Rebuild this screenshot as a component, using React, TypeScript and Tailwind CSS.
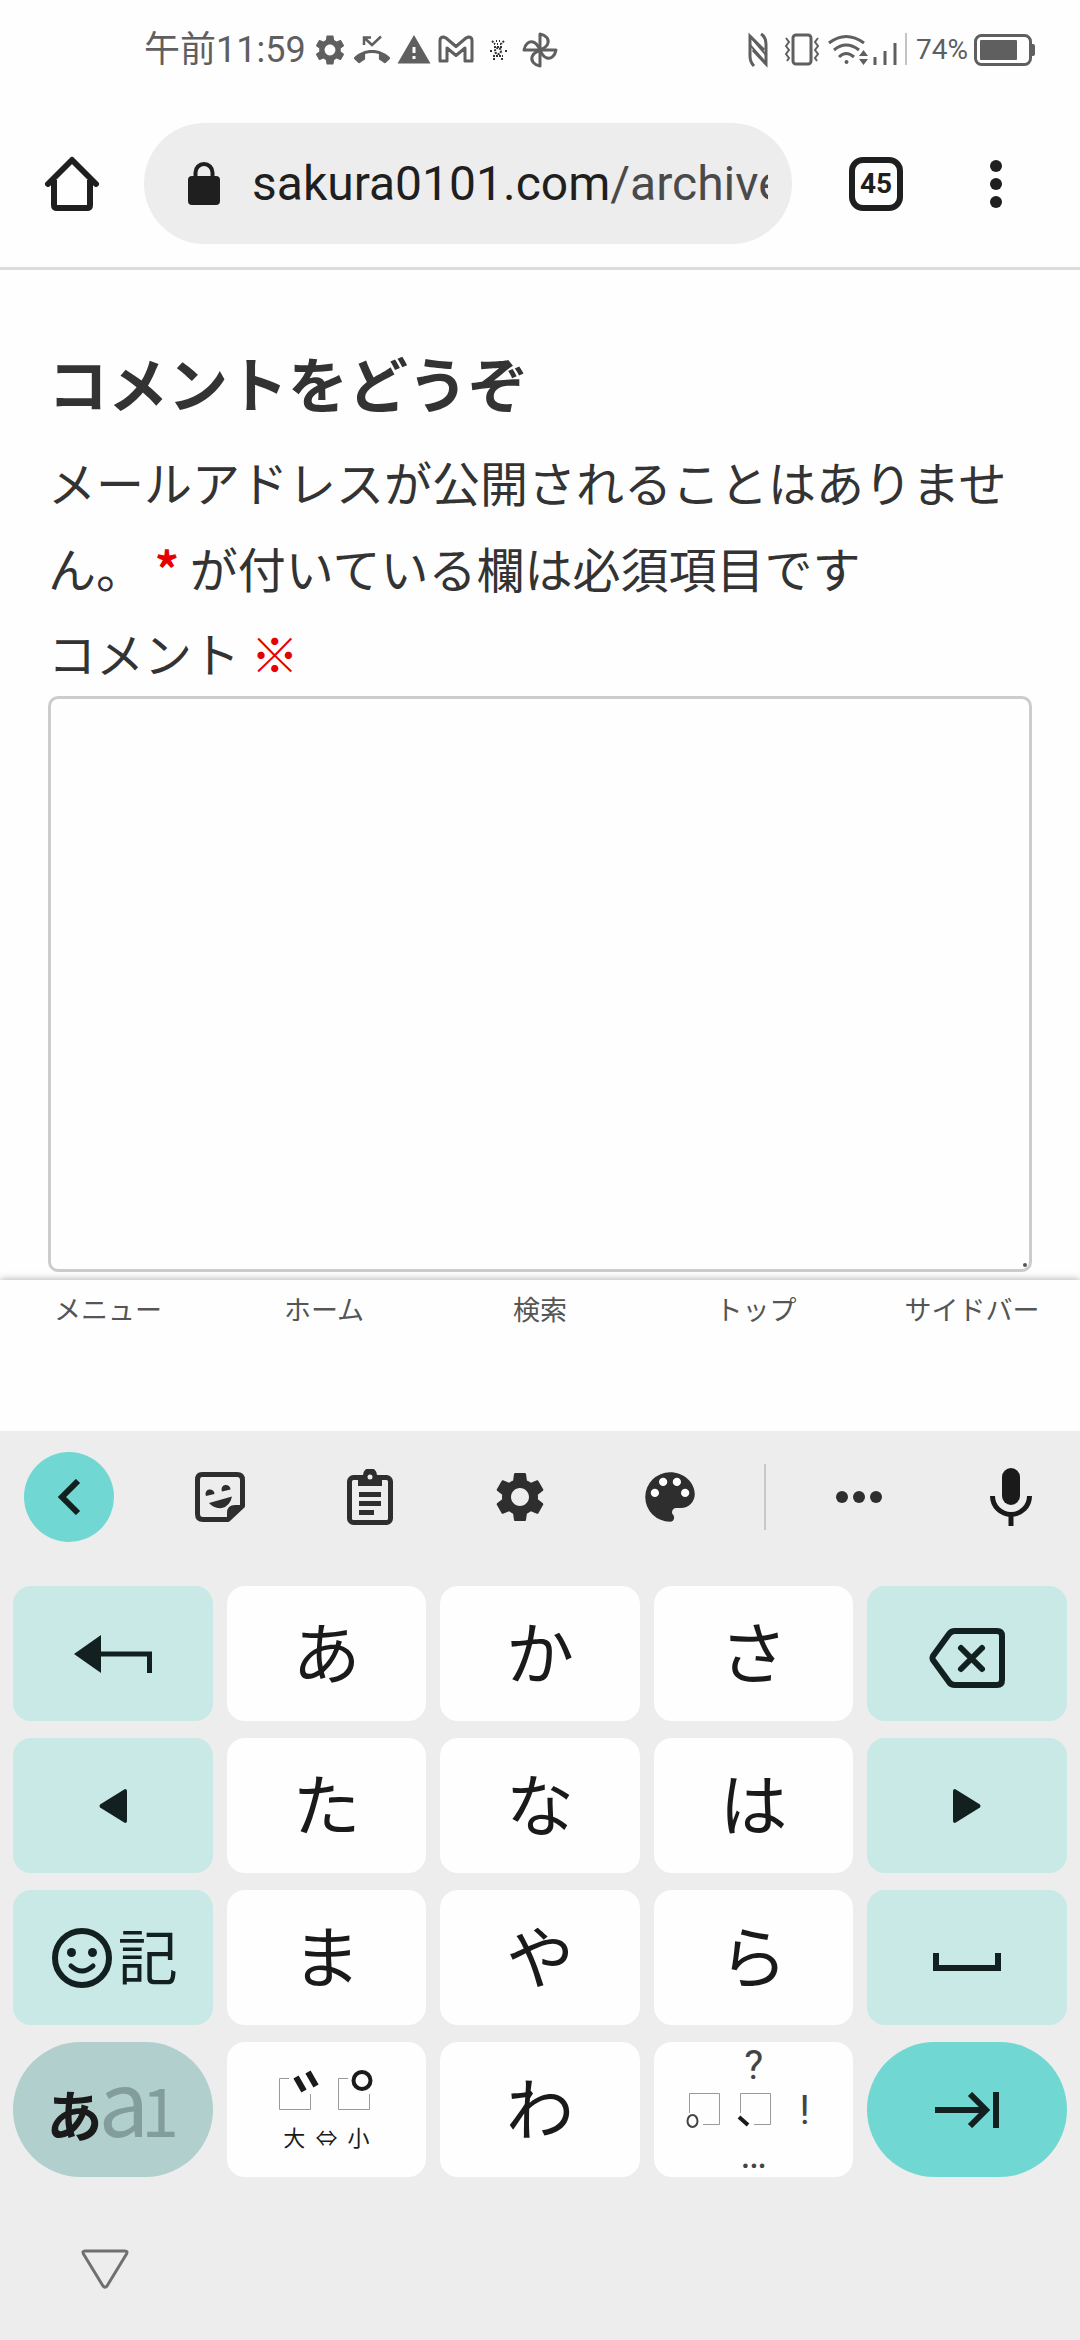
import type { ReactNode } from "react"
import clsx from "clsx"
import { MdSettings, MdWarning } from "react-icons/md"

const menuItems = ["メニュー", "ホーム", "検索", "トップ", "サイドバー"]

function StatusBar() {
    return (
        <div className="flex h-[100px] items-center justify-between pl-36 pr-11 text-[#5f5f5f]">
            <div className="flex items-center gap-[6px]">
                <span className="text-[36px] leading-[44px]">午前11:59</span>
                <MdSettings className="size-9" />
                <svg className="size-9" viewBox="0 0 36 36" fill="none">
                    <path d="M10 13V5.500H17M10.500 6L18 13L27 4.500" stroke="currentColor" strokeWidth="2.500" />
                    <path
                        transform="scale(1.5)"
                        fill="currentColor"
                        d="M23.710 16.670C20.660 13.780 16.540 12 12 12 7.460 12 3.340 13.780.29 16.670c-.18.18-.29.43-.29.71s.11.53.29.71l2.480 2.480c.18.18.43.29.71.29.27 0 .52-.11.7-.28.79-.74 1.690-1.360 2.660-1.850.33-.16.56-.5.56-.9v-3.100C8.850 14.250 10.400 14 12 14s3.150.25 4.600.73v3.100c0 .4.23.74.56.9.98.49 1.870 1.120 2.670 1.850.18.18.43.28.7.28.28 0 .53-.11.71-.29l2.480-2.480c.18-.18.29-.43.29-.71s-.12-.52-.3-.71z"
                    />
                </svg>
                <MdWarning className="size-9" />
                <svg className="size-9" viewBox="0 0 36 36" fill="none" stroke="currentColor" strokeWidth="3" strokeLinejoin="round">
                    <path d="M2 8.500Q2 5 5.500 5L8 6L18 14.500L28 6L30.500 5Q34 5 34 8.500V29H27V16L18 23.500L9 16V29H2Z" />
                </svg>
                <svg className="mx-2 h-6 w-5" viewBox="0 0 20 24" fill="none" stroke="#333" strokeWidth="2">
                    <path d="M4 3l3 3M16 3l-3 3M6 9h8M5 18h10M6 22v-2M14 22v-2M2 13h2M17 13h2" strokeDasharray="2 1" />
                    <circle cx="10" cy="13" r="3" strokeDasharray="2 1" />
                    <path d="M6 6h8M8 3h4" strokeDasharray="1 2" />
                </svg>
                <svg className="size-9" viewBox="0 0 36 36" fill="none" stroke="currentColor" strokeWidth="3" strokeLinejoin="round">
                    <path d="M18 18V2C24 3 27 7 26 11Q25 15 18 18" />
                    <path d="M18 18H34C33 24 29 27 25 26Q21 25 18 18" />
                    <path d="M18 18V34C12 33 9 29 10 25Q11 21 18 18" />
                    <path d="M18 18H2C3 12 7 9 11 10Q15 11 18 18" />
                </svg>
            </div>

            <div className="flex items-center">
                <svg className="h-9 w-6" viewBox="0 0 24 36" fill="none" stroke="currentColor" strokeWidth="3">
                    <path d="M8 34Q4 30 4 24V4L18 18" />
                    <path d="M15 2Q20 5 20 12V32L7 18" />
                    <path d="M4 4L20 23M4 13L20 31" strokeWidth="2" />
                </svg>
                <svg className="ml-[14px] h-9 w-9" viewBox="0 0 36 36" fill="none" stroke="currentColor" strokeWidth="3">
                    <rect x="9" y="3" width="18" height="29" rx="3" />
                    <path d="M2 6l3 4-3 4 3 4-3 4 3 4-2 3M34 6l-3 4 3 4-3 4 3 4-3 4 2 3" strokeWidth="2" />
                </svg>
                <svg className="ml-2 h-9 w-10" viewBox="0 0 40 36" fill="none" stroke="currentColor" strokeWidth="3">
                    <path d="M1 11Q18 -2 36 11M6 18Q18 8 31 18M11 25Q18 18 26 25" />
                    <circle cx="18.500" cy="30" r="2" fill="currentColor" stroke="none" />
                    <path d="M31 24l4.500-6 4.500 6zM31 27l4.500 6 4.500-6z" fill="currentColor" stroke="none" />
                </svg>
                <svg className="ml-1 h-9 w-9" viewBox="0 0 36 36" stroke="currentColor" strokeWidth="3">
                    <path d="M3 33v-8M13 33V19M23 33V11" />
                    <path d="M34 33V1" stroke="#c4c4c4" strokeWidth="2" />
                </svg>
                <span className="ml-2 text-[28px] leading-9">74%</span>
                <svg className="ml-[6px] h-8 w-[62px]" viewBox="0 0 62 32" fill="none">
                    <rect x="1.500" y="1.500" width="55" height="29" rx="6" stroke="currentColor" strokeWidth="3" />
                    <rect x="6" y="6" width="37" height="20" rx="1" fill="currentColor" />
                    <path d="M58 10h1q2 0 2 2v8q0 2-2 2h-1z" fill="currentColor" />
                </svg>
            </div>
        </div>
    )
}

function AddressBar() {
    return (
        <header className="flex h-[170px] items-center border-b-[3px] border-[#dcdcdc] text-[#1f1f1f]">
            <button aria-label="ホーム" className="flex w-36 justify-center">
                <svg className="size-14" viewBox="0 0 56 56" fill="none" stroke="currentColor" strokeWidth="6" strokeLinejoin="round">
                    <path d="M4 28L28 4L52 28" strokeLinecap="round" />
                    <path d="M10 24V49Q10 52 13 52H43Q46 52 46 49V24" />
                </svg>
            </button>
            <button className="flex h-[121px] min-w-0 flex-1 items-center rounded-full bg-[#ededed] pl-11 pr-6">
                <svg className="h-[44px] w-8 shrink-0" viewBox="0 0 32 44" fill="none">
                    <path d="M7.500 18V10.500a8.500 8.500 0 0 1 17 0V18" stroke="currentColor" strokeWidth="4" />
                    <rect y="14" width="32" height="29" rx="4" fill="currentColor" />
                </svg>
                <span className="ml-8 min-w-0 overflow-hidden whitespace-nowrap text-left text-[48px] leading-[60px]">
                    sakura0101.com<span className="text-[#4a4a4a]">/archives</span>
                </span>
            </button>
            <button aria-label="タブ" className="ml-[57px] flex size-[54px] items-center justify-center rounded-[14px] border-[6px] border-current text-[28px] font-bold leading-none">
                45
            </button>
            <button aria-label="その他" className="ml-[69px] mr-[60px] flex h-[60px] w-12 items-center justify-center">
                <svg className="h-12 w-3" viewBox="0 0 12 48" fill="currentColor">
                    <circle cx="6" cy="6" r="6" />
                    <circle cx="6" cy="24" r="6" />
                    <circle cx="6" cy="42" r="6" />
                </svg>
            </button>
        </header>
    )
}

function CommentForm() {
    return (
        <main className="px-12 pb-2 pt-[67px] font-['Noto_Sans_CJK_JP',sans-serif] text-[48px] text-[#333]">
            <h3 className="mb-[11px] text-[60px] font-bold leading-[90px]">コメントをどうぞ</h3>
            <p className="leading-[86px]">
                メールアドレスが公開されることはありません。 <span className="font-bold text-[#e60000]">*</span> が付いている欄は必須項目です
            </p>
            <label htmlFor="comment" className="block pb-[2px] leading-[84px]">
                コメント <span className="text-[#e60000]">※</span>
            </label>
            <div className="relative">
                <textarea id="comment" className="block h-[576px] w-full resize-none rounded-[10px] border-[3px] border-[#ccc] bg-transparent p-4" />
                <span className="absolute bottom-[5px] right-[5px] size-1 rounded-full bg-[#555]" />
            </div>
        </main>
    )
}

function MobileMenu() {
    return (
        <nav className="relative grid h-[151px] grid-cols-5 bg-[#fefefe] pt-[9px] font-['Noto_Sans_CJK_JP',sans-serif] text-[27px] leading-10 text-[#555] shadow-[0_0_8px_rgba(0,0,0,0.35)]">
            {menuItems.map((item) => (
                <a key={item} href="#" className="text-center">{item}</a>
            ))}
        </nav>
    )
}

function Toolbar() {
    return (
        <div className="grid h-[130px] grid-cols-[145fr_150fr_150fr_150fr_150fr_39fr_150fr_146fr] items-center justify-items-center text-[#2e2e2e]">
            <button aria-label="戻る" className="mr-2 flex size-[90px] items-center justify-center rounded-full bg-[#71d7d3]">
                <svg className="h-9 w-6" viewBox="0 0 24 36" fill="none" stroke="#132020" strokeWidth="6">
                    <path d="M21 2L5 18L21 34" />
                </svg>
            </button>
            <button aria-label="ステッカー">
                <svg className="size-[52px]" viewBox="0 0 52 52" fill="none">
                    <path d="M8 3.500H43Q48.500 3.500 48.500 9V35L34 48.500H9Q3.500 48.500 3.500 43V9Q3.500 3.500 8 3.500Z" stroke="currentColor" strokeWidth="5" strokeLinejoin="round" />
                    <path d="M33 50V42Q33 34 41 34H50Z" fill="currentColor" />
                    <path d="M12 25a4.500 4.500 0 1 1 8.500-2zM28 20.500a4.500 4.500 0 1 1 8.500-2zM15 32L38 25.500Q36 35 28 37Q20 38 15 32Z" fill="currentColor" />
                </svg>
            </button>
            <button aria-label="クリップボード">
                <svg className="h-14 w-12" viewBox="0 0 48 56" fill="none">
                    <rect x="3.500" y="8.500" width="41" height="45" rx="4" stroke="currentColor" strokeWidth="5" />
                    <path d="M12 6H17A7 7 0 0 1 31 6H36V17H12Z" fill="currentColor" />
                    <circle cx="24" cy="8" r="2.500" fill="#ededed" />
                    <path d="M13 25.500H35M13 34.500H35M13 43.500H28" stroke="currentColor" strokeWidth="5" />
                </svg>
            </button>
            <button aria-label="設定">
                <MdSettings className="size-[60px]" />
            </button>
            <button aria-label="テーマ">
                <svg className="size-[66px]" viewBox="0 0 24 24" fill="currentColor">
                    <path d="M12 3a9 9 0 0 0 0 18c.83 0 1.500-.67 1.500-1.500 0-.39-.15-.74-.39-1.010-.23-.26-.38-.61-.38-.99 0-.83.67-1.500 1.500-1.500H16c2.760 0 5-2.240 5-5 0-4.420-4.030-8-9-8z" />
                    <g fill="#fff">
                        <circle cx="6.500" cy="10.500" r="1.500" />
                        <circle cx="9.500" cy="6.500" r="1.500" />
                        <circle cx="14.500" cy="6.500" r="1.500" />
                        <circle cx="17.500" cy="10.500" r="1.500" />
                    </g>
                </svg>
            </button>
            <span className="h-[66px] w-[2px] bg-[#c8c8c8]" />
            <button aria-label="もっと見る">
                <svg className="h-3 w-[46px]" viewBox="0 0 46 12" fill="currentColor">
                    <circle cx="6" cy="6" r="6" />
                    <circle cx="23" cy="6" r="6" />
                    <circle cx="40" cy="6" r="6" />
                </svg>
            </button>
            <button aria-label="音声入力" className="ml-2 text-[#1a1a1a]">
                <svg className="h-[58px] w-[42px]" viewBox="0 0 42 58" fill="none" stroke="currentColor" strokeWidth="5">
                    <rect x="12" y="0" width="18" height="37" rx="9" fill="currentColor" stroke="none" />
                    <path d="M2.500 28a18.500 18.500 0 0 0 37 0M21 46V58" />
                </svg>
            </button>
        </div>
    )
}

function Key({ children, label, tone }: { children: ReactNode; label?: string; tone?: "soft" | "mode" | "action" }) {
    return (
        <button
            aria-label={label}
            className={clsx(
                "flex h-[135px] items-center justify-center text-[68px] leading-none text-[#1a1a1a]",
                !tone && "rounded-[18px] bg-[#fefefe]",
                tone === "soft" && "rounded-[18px] bg-[#c9e9e6] text-[#132020]",
                tone === "mode" && "rounded-full bg-[#b0cfcd]",
                tone === "action" && "rounded-full bg-[#71d7d3]",
            )}
        >
            {children}
        </button>
    )
}

function KanaKey({ kana }: { kana: string }) {
    return (
        <Key>
            <span className="pb-2">{kana}</span>
        </Key>
    )
}

function Keyboard() {
    return (
        <section className="relative bg-[#ededed] pb-[72px] pt-[1px] font-['Noto_Sans_CJK_JP',sans-serif]">
            <Toolbar />
            <div className="mt-6 grid grid-cols-5 gap-x-[14px] gap-y-[17px] px-[13px]">
                <Key tone="soft" label="戻す">
                    <svg className="h-[38px] w-[78px]" viewBox="0 0 78 38" fill="none">
                        <path d="M0 19L27 0V38Z" fill="currentColor" />
                        <path d="M26 19H75.500V38" stroke="currentColor" strokeWidth="5" />
                    </svg>
                </Key>
                <KanaKey kana="あ" />
                <KanaKey kana="か" />
                <KanaKey kana="さ" />
                <Key tone="soft" label="削除">
                    <svg className="mt-2 h-[60px] w-[76px]" viewBox="0 0 76 60" fill="none" stroke="currentColor" strokeWidth="6" strokeLinejoin="round">
                        <path d="M26 3H68Q73 3 73 8V52Q73 57 68 57H26Q22 57 20 54L4 32Q3 30 4 28L20 6Q22 3 26 3Z" />
                        <path d="M32 20L53 41M53 20L32 41" strokeLinecap="round" />
                    </svg>
                </Key>

                <Key tone="soft" label="左">
                    <svg className="h-[34px] w-7" viewBox="0 0 28 34" fill="currentColor">
                        <path d="M26 0Q28 0 28 2V32Q28 34 26 34L1 18.500Q0 17 1 15.500Z" />
                    </svg>
                </Key>
                <KanaKey kana="た" />
                <KanaKey kana="な" />
                <KanaKey kana="は" />
                <Key tone="soft" label="右">
                    <svg className="h-[34px] w-7" viewBox="0 0 28 34" fill="currentColor">
                        <path d="M2 0Q0 0 0 2V32Q0 34 2 34L27 18.500Q28 17 27 15.500Z" />
                    </svg>
                </Key>

                <Key tone="soft">
                    <svg className="ml-1 size-[60px]" viewBox="0 0 60 60" fill="none" stroke="currentColor" strokeWidth="6">
                        <circle cx="30" cy="30" r="27" />
                        <path d="M19 38Q30 48 41 38" strokeWidth="5" strokeLinecap="round" />
                        <circle cx="19.500" cy="24.500" r="4.500" fill="currentColor" stroke="none" />
                        <circle cx="40.500" cy="24.500" r="4.500" fill="currentColor" stroke="none" />
                    </svg>
                    <span className="ml-[6px] pb-2 text-[60px]">記</span>
                </Key>
                <KanaKey kana="ま" />
                <KanaKey kana="や" />
                <KanaKey kana="ら" />
                <Key tone="soft" label="空白">
                    <svg className="mt-2 h-[18px] w-[68px]" viewBox="0 0 68 18" fill="none" stroke="currentColor" strokeWidth="6">
                        <path d="M3 0V15H65V0" />
                    </svg>
                </Key>

                <Key tone="mode">
                    <span className="flex items-baseline pb-6">
                        <span className="text-[56px] font-bold">あ</span>
                        <span className="-ml-1 text-[90px] text-[#829d9c]">a</span>
                        <span className="-ml-2 text-[68px] text-[#829d9c]">1</span>
                    </span>
                </Key>
                <Key>
                    <span className="flex flex-col items-center gap-3">
                        <svg className="h-10 w-[94px]" viewBox="0 0 94 40" fill="none">
                            <path d="M10 8.500H.5V39.500H31.500V24M69 8.500H59.500V39.500H90.500V24" stroke="#999" />
                            <path d="M17 7L25 21M29 2L37 16" stroke="currentColor" strokeWidth="6" />
                            <circle cx="83" cy="10.500" r="8.500" stroke="currentColor" strokeWidth="4" />
                        </svg>
                        <span className="flex gap-[10px] text-[22px] leading-7">
                            <span>大</span>
                            <span>⇔</span>
                            <span>小</span>
                        </span>
                    </span>
                </Key>
                <KanaKey kana="わ" />
                <Key>
                    <span className="grid grid-cols-[51px_51px_51px] grid-rows-[48px_42px_45px] items-center justify-items-center font-[Roboto,sans-serif] text-[40px] text-[#444]">
                        <span className="col-span-3">?</span>
                        <svg className="h-9 w-[34px]" viewBox="0 0 34 36" fill="none">
                            <path d="M3.500 20V.5H33.500V31.500H17" stroke="#999" />
                            <ellipse cx="6.500" cy="28" rx="5" ry="6" stroke="currentColor" strokeWidth="2" />
                        </svg>
                        <svg className="h-9 w-[34px]" viewBox="0 0 34 36" fill="none">
                            <path d="M3.500 20V.5H33.500V31.500H17" stroke="#999" />
                            <path d="M2 24L11 32" stroke="#1a1a1a" strokeWidth="4" />
                        </svg>
                        <span>!</span>
                        <span className="col-span-3">…</span>
                    </span>
                </Key>
                <Key tone="action" label="次へ">
                    <svg className="h-9 w-16" viewBox="0 0 64 36" fill="none" stroke="#132020" strokeWidth="6">
                        <path d="M0 18H51M35 2L51 18L35 34M61 0V36" />
                    </svg>
                </Key>
            </div>

            <button aria-label="閉じる" className="ml-[81px] mt-[72px] block">
                <svg className="h-10 w-12" viewBox="0 0 48 40" fill="none" stroke="#707070" strokeWidth="3" strokeLinejoin="round">
                    <path d="M4 2H44Q47 2 45.500 5L26 37Q24 39.500 22 37L2.500 5Q1 2 4 2Z" />
                </svg>
            </button>
        </section>
    )
}

export default function App() {
    return (
        <div className="min-h-screen bg-[#fefefe] font-[Roboto,'Noto_Sans_CJK_JP',sans-serif]">
            <StatusBar />
            <AddressBar />
            <CommentForm />
            <MobileMenu />
            <Keyboard />
        </div>
    )
}
